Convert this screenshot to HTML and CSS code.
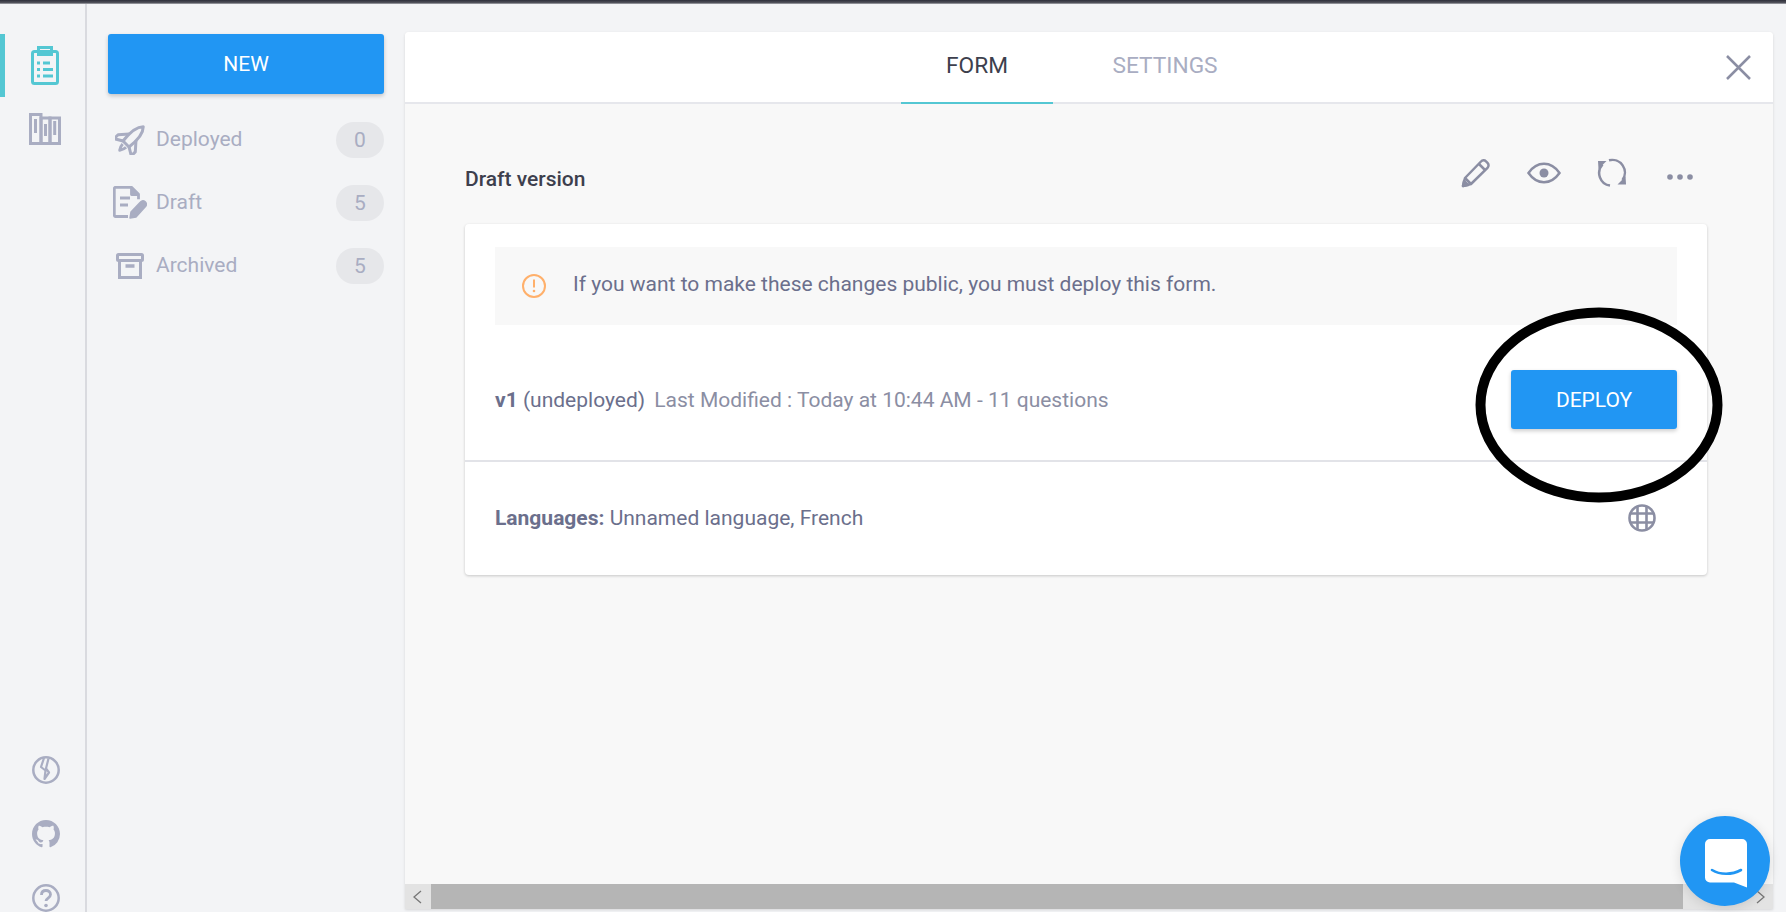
FILE: index.html
```html
<!DOCTYPE html>
<html lang="en">
<head>
    <meta charset="UTF-8">
    <title>Form - Draft version</title>
    <link rel="stylesheet" href="styles.css">
</head>
<body>
    <div class="topbar"></div>
    <div class="app">
        <nav class="rail">
            <div class="rail-top">
                <a class="rail-link active">
                    <svg class="icon-clipboard" viewBox="0 0 28 39" fill="none" stroke="#54c7d3" stroke-width="3">
                        <rect x="1.5" y="5.5" width="25" height="32" rx="2"/>
                        <rect x="7.5" y="1.5" width="13" height="7"/>
                        <path d="M6 17h3M12 17h7M6 23.500h3M12 23.500h10M6 30h3M12 30h10"/>
                    </svg>
                </a>
                <a class="rail-link">
                    <svg class="icon-books" viewBox="0 0 32 32" fill="none" stroke="#a9adc2" stroke-width="3">
                        <rect x="1.500" y="1.500" width="10.500" height="29"/>
                        <rect x="12" y="5" width="9" height="25.500"/>
                        <rect x="21" y="5" width="9.500" height="25.500"/>
                        <path d="M6.500 6v14M16.500 11v12M25.700 8v14" stroke-width="3"/>
                    </svg>
                </a>
            </div>
            <div class="rail-bottom">
                <svg class="rail-icon" viewBox="0 0 28 28" fill="none" stroke="#a9adc2" stroke-width="2.500">
                    <circle cx="14" cy="14" r="12.700"/>
                    <path d="M12 2L9 11l4.500 3.500-1 8.500 4.500-6.500-3-4 2.500-10" stroke-width="2.200" stroke-linejoin="round"/>
                </svg>
                <svg class="rail-icon" viewBox="0 0 16 16" fill="#a9adc2">
                    <path fill-rule="evenodd" d="M8 0C3.580 0 0 3.580 0 8c0 3.540 2.290 6.530 5.470 7.590.4.070.55-.17.55-.38 0-.19-.01-.82-.01-1.490-2.010.37-2.530-.49-2.690-.94-.09-.23-.48-.94-.82-1.130-.28-.15-.68-.52-.01-.53.63-.01 1.080.58 1.230.82.72 1.210 1.870.87 2.330.66.07-.52.28-.87.51-1.070-1.780-.2-3.640-.89-3.640-3.950 0-.87.31-1.590.82-2.150-.08-.2-.36-1.020.08-2.120 0 0 .67-.21 2.200.82.64-.18 1.320-.27 2-.27.68 0 1.360.09 2 .27 1.530-1.040 2.200-.82 2.200-.82.44 1.100.16 1.920.08 2.120.51.56.82 1.270.82 2.150 0 3.070-1.870 3.750-3.650 3.950.29.25.54.73.54 1.480 0 1.070-.01 1.930-.01 2.200 0 .21.15.46.55.38A8.013 8.013 0 0016 8c0-4.420-3.580-8-8-8z"/>
                </svg>
                <svg class="rail-icon" viewBox="0 0 28 28" fill="none" stroke="#a9adc2" stroke-width="2.500">
                    <circle cx="14" cy="14" r="12.700"/>
                    <path d="M9.500 11c0-3 2-4.500 4.500-4.500s4.500 1.700 4.500 4c0 3.500-4.500 3.500-4.500 6.500" stroke-width="2.800"/>
                    <circle cx="14" cy="21.500" r="1.800" fill="#a9adc2" stroke="none"/>
                </svg>
            </div>
        </nav>

        <aside class="side">
            <button class="btn btn-new">NEW</button>
            <ul class="side-list">
                <li class="side-item">
                    <span class="side-icon">
                        <svg width="30" height="30" viewBox="0 0 32 32" fill="none" stroke="#a9adc2" stroke-width="3.200" stroke-linejoin="round">
                            <g transform="rotate(45 16 16)">
                                <path d="M16 -4C21 1 22 10 20.500 22h-9C10 10 11 1 16 -4z"/>
                                <path d="M11 12L3 21v6l8.500-5M21 12l8 9v6l-8.500-5"/>
                                <path d="M13.500 24.500c0 3 1 5 2.500 7 1.500-2 2.500-4 2.500-7"/>
                            </g>
                        </svg>
                    </span>
                    <span class="side-label">Deployed</span>
                    <span class="pill">0</span>
                </li>
                <li class="side-item">
                    <span class="side-icon">
                        <svg width="34" height="34" viewBox="0 0 34 34" fill="none" stroke="#a9adc2" stroke-width="2.800" stroke-linejoin="round">
                            <path d="M15 30.500H2.500a1.200 1.200 0 0 1-1.200-1.200V2.500a1.200 1.200 0 0 1 1.200-1.200h16l7 7v5"/>
                            <path d="M18.500 1.500v7h7" fill="#a9adc2"/>
                            <path d="M7 12h10M7 19h8"/>
                            <path d="M17 32l1-6 9.500-10a2.300 2.300 0 0 1 5 4.500L23 31z" fill="#a9adc2" stroke-width="1.500"/>
                        </svg>
                    </span>
                    <span class="side-label">Draft</span>
                    <span class="pill">5</span>
                </li>
                <li class="side-item">
                    <span class="side-icon">
                        <svg width="28" height="26" viewBox="0 0 28 26" fill="none" stroke="#a9adc2" stroke-width="3">
                            <rect x="1.500" y="1.500" width="25" height="6" rx="1"/>
                            <path d="M3.500 7.500v17h21v-17"/>
                            <path d="M9.500 13h9" stroke-width="3.500"/>
                        </svg>
                    </span>
                    <span class="side-label">Archived</span>
                    <span class="pill">5</span>
                </li>
            </ul>
        </aside>

        <main class="panel">
            <header class="panel-head">
                <div class="tabs">
                    <a class="tab active">FORM</a>
                    <a class="tab">SETTINGS</a>
                </div>
                <svg class="icon-close" viewBox="0 0 25 25" fill="none" stroke="#8b8ea3" stroke-width="2.500">
                    <path d="M1 1l23 23M24 1L1 24"/>
                </svg>
            </header>

            <div class="panel-body">
                <div class="title-row">
                    <h2 class="title">Draft version</h2>
                    <div class="tools">
                        <svg width="30" height="30" viewBox="0 0 30 30" fill="none" stroke="#8b8ea3" stroke-width="2.500" stroke-linejoin="round">
                            <path d="M2 28l2-8L20 3.500a3.500 3.500 0 0 1 5-.2l1.500 1.500a3.500 3.500 0 0 1 0 5L10 26z"/>
                            <path d="M18 6l6.500 6.500M4 20l6 6"/>
                            <path d="M2 28l1-5 4 4z" fill="#8b8ea3"/>
                        </svg>
                        <svg width="34" height="22" viewBox="0 0 34 22" fill="none" stroke="#8b8ea3" stroke-width="2.500">
                            <path d="M1.500 11C6 4.500 11 1.800 17 1.800S28 4.500 32.500 11C28 17.500 23 20.200 17 20.200S6 17.500 1.500 11z"/>
                            <circle cx="17" cy="11" r="4.500" fill="#8b8ea3" stroke="none"/>
                        </svg>
                        <svg width="30" height="30" viewBox="0 0 30 30" fill="none" stroke="#8b8ea3" stroke-width="2.500">
                            <path d="M5.500 6.500A12.700 12.700 0 0 0 13 27.600"/>
                            <path d="M12 2.300A12.700 12.700 0 0 1 25.500 22"/>
                            <path d="M1 3h8.500L1.500 11z" fill="#8b8ea3" stroke="none"/>
                            <path d="M29 26.500h-8.500l8-8z" fill="#8b8ea3" stroke="none"/>
                        </svg>
                        <svg class="dots" width="26" height="6" viewBox="0 0 26 6" fill="#8b8ea3">
                            <circle cx="3" cy="3" r="2.800"/>
                            <circle cx="13" cy="3" r="2.800"/>
                            <circle cx="23" cy="3" r="2.800"/>
                        </svg>
                    </div>
                </div>

                <section class="card">
                    <div class="notice">
                        <svg width="24" height="24" viewBox="0 0 24 24" fill="none" stroke="#ffb06b" stroke-width="2">
                            <circle cx="12" cy="12" r="11"/>
                            <path d="M12 5.500v8"/>
                            <circle cx="12" cy="17" r="1.300" fill="#ffb06b" stroke="none"/>
                        </svg>
                        <span class="notice-text">If you want to make these changes public, you must deploy this form.</span>
                    </div>
                    <div class="version-row">
                        <p class="version"><strong>v1</strong> (undeployed) <span class="muted">Last Modified : Today at 10:44 AM - 11 questions</span></p>
                        <button class="btn btn-deploy">DEPLOY</button>
                    </div>
                    <div class="lang-row">
                        <p class="langs"><strong>Languages:</strong> Unnamed language, French</p>
                        <svg class="icon-globe" width="28" height="28" viewBox="0 0 28 28" fill="none" stroke="#8b8ea3" stroke-width="2.600">
                            <circle cx="14" cy="14" r="12.500"/>
                            <path d="M9.500 2v24M18.500 2v24M2 9.500h24M2 18.500h24"/>
                        </svg>
                    </div>
                </section>
            </div>

            <div class="scrollbar">
                <span class="scroll-btn">
                    <svg width="12" height="14" viewBox="0 0 12 14" fill="none" stroke="#777" stroke-width="1.300"><path d="M9 1L2 7l7 6"/></svg>
                </span>
                <span class="scroll-thumb"></span>
                <span class="scroll-btn scroll-end">
                    <svg width="12" height="14" viewBox="0 0 12 14" fill="none" stroke="#777" stroke-width="1.300"><path d="M3 1l7 6-7 6"/></svg>
                </span>
            </div>
        </main>
    </div>

    <!-- hand drawn circle around the deploy button -->
    <svg class="marker" width="248" height="196" viewBox="0 0 248 196" fill="none" stroke="#000" stroke-width="10">
        <ellipse cx="124" cy="98" rx="118.500" ry="92.500"/>
    </svg>

    <a class="chat">
        <svg width="42" height="49" viewBox="0 0 42 49">
            <path d="M5 0h32a5 5 0 0 1 5 5v43.500L29 43.500H5a5 5 0 0 1-5-5V5a5 5 0 0 1 5-5z" fill="#fff"/>
            <path d="M7 31c8 5 20 5 29 0" fill="none" stroke="#2196f3" stroke-width="2.600" stroke-linecap="round"/>
        </svg>
    </a>
</body>
</html>
```

FILE: styles.css
```css
* {
    box-sizing: border-box;
}
html, body {
    height: 100%;
}
body {
    margin: 0;
    overflow: hidden;
    font-family: Roboto, "Liberation Sans", sans-serif;
    font-size: 21px;
    color: #6b6f8c;
    background-color: #f3f4f6;
}
p, h2, ul {
    margin: 0;
    padding: 0;
}
svg {
    display: block;
    flex: none;
}

.topbar {
    height: 4px;
    background: linear-gradient(#2e2f3a, #55565f 75%, #c4c5ca);
}
.app {
    display: flex;
    height: 908px;
}

/* left icon rail */
.rail {
    width: 87px;
    flex: none;
    display: flex;
    flex-direction: column;
    justify-content: space-between;
    border-right: 2px solid #d9dadf;
}
.rail-top {
    padding-top: 30px;
}
.rail-link {
    display: flex;
    justify-content: center;
    height: 63px;
    padding-top: 12px;
    border-left: 5px solid transparent;
}
.rail-link.active {
    border-left-color: #54c7d3;
}
.rail-link + .rail-link {
    padding-top: 16px;
    padding-right: 0;
}
.icon-clipboard {
    width: 28px;
    height: 39px;
}
.icon-books {
    width: 32px;
    height: 32px;
}
.rail-bottom {
    display: flex;
    flex-direction: column;
    align-items: center;
    gap: 36px;
}
.rail-icon {
    width: 28px;
    height: 28px;
    margin-left: 7px;
}

/* second column */
.side {
    width: 318px;
    flex: none;
    padding: 30px 21px 0;
}
.btn {
    display: block;
    border: none;
    border-radius: 3px;
    color: #fff;
    font-family: inherit;
    font-size: 21px;
    background-color: #2196f3;
    box-shadow: 0 2px 4px rgba(0, 0, 0, 0.2);
}
.btn-new {
    width: 100%;
    height: 60px;
}
.side-list {
    list-style: none;
    margin-top: 28px;
}
.side-item {
    display: flex;
    align-items: center;
    height: 36px;
    margin-bottom: 27px;
    color: #a9adc2;
}
.side-icon {
    width: 48px;
    display: flex;
    justify-content: center;
    padding-right: 4px;
}
.side-label {
    flex: 1;
    padding-bottom: 2px;
}
.pill {
    width: 48px;
    height: 36px;
    line-height: 36px;
    text-align: center;
    border-radius: 18px;
    background-color: #e6e7ea;
}

/* main panel */
.panel {
    flex: 1;
    display: flex;
    flex-direction: column;
    margin: 28px 13px 3px 0;
    border-radius: 4px 4px 0 0;
    background-color: #f8f8f8;
    box-shadow: 0 1px 3px rgba(0, 0, 0, 0.12);
}
.panel-head {
    position: relative;
    height: 72px;
    flex: none;
    display: flex;
    justify-content: center;
    background-color: #fff;
    border-bottom: 2px solid #e6e7ec;
    border-radius: 4px 4px 0 0;
}
.tabs {
    display: flex;
}
.tab {
    width: 152px;
    height: 72px;
    line-height: 68px;
    text-align: center;
    font-size: 22.700px;
    color: #a9adc2;
}
.tab.active {
    color: #3d3f4d;
    border-bottom: 2px solid #54c7d3;
}
.tab + .tab {
    width: 224px;
}
.icon-close {
    position: absolute;
    top: 23px;
    right: 22px;
    width: 25px;
    height: 25px;
}
.panel-body {
    flex: 1;
    padding: 0 66px 0 60px;
}
.title-row {
    height: 120px;
    display: flex;
    align-items: center;
    justify-content: space-between;
    padding: 30px 14px 0 0;
}
.title {
    font-size: 21px;
    font-weight: 500;
    color: #3d3f4d;
}
.tools {
    display: flex;
    align-items: center;
    gap: 36px;
    margin-top: -12px;
}
.dots {
    margin: 8px 0 0 4px;
}
.card {
    height: 351px;
    padding-top: 23px;
    border-radius: 4px;
    background-color: #fff;
    box-shadow: 0 1px 3px rgba(0, 0, 0, 0.2);
}
.notice {
    display: flex;
    align-items: center;
    gap: 27px;
    height: 78px;
    margin: 0 30px;
    padding-left: 27px;
    background-color: #f8f8f8;
}
.notice-text {
    padding-bottom: 4px;
}
.version-row {
    display: flex;
    align-items: center;
    justify-content: space-between;
    height: 137px;
    padding: 14px 30px 0;
    border-bottom: 2px solid #e2e3e8;
}
.version strong, .langs strong {
    font-weight: 700;
}
.muted {
    margin-left: 4px;
    color: #8b8ea3;
}
.btn-deploy {
    width: 166px;
    height: 59px;
}
.lang-row {
    display: flex;
    align-items: center;
    justify-content: space-between;
    height: 112px;
    padding: 0 51px 0 30px;
}

/* fake horizontal scrollbar at the bottom of the panel */
.scrollbar {
    flex: none;
    display: flex;
    height: 25px;
    background-color: #e3e3e3;
}
.scroll-btn {
    width: 26px;
    display: flex;
    align-items: center;
    justify-content: center;
}
.scroll-thumb {
    width: 1252px;
    background-color: #b5b5b5;
}
.scroll-end {
    margin-left: auto;
}

/* things lying over the page */
.marker {
    position: absolute;
    left: 1475px;
    top: 307px;
}
.chat {
    position: absolute;
    left: 1680px;
    top: 816px;
    width: 90px;
    height: 90px;
    display: flex;
    align-items: center;
    justify-content: center;
    padding: 4px 0 0 2px;
    border-radius: 50%;
    background-color: #2196f3;
    box-shadow: 0 2px 12px rgba(0, 0, 0, 0.12);
}
```
